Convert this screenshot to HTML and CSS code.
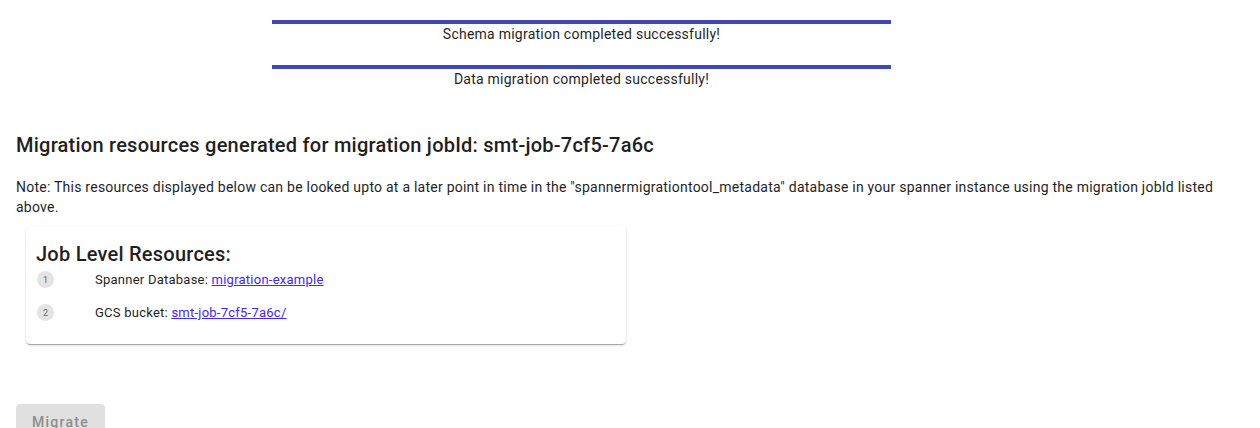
FILE: index.html
```html
<!DOCTYPE html>
<html>
<head>
<meta charset="utf-8">
<link rel="stylesheet" href="styles.css">
</head>
<body>
<div class="page">
  <div class="progress-block first">
    <div class="bar"></div>
    <div class="status">Schema migration completed successfully!</div>
  </div>
  <div class="progress-block">
    <div class="bar"></div>
    <div class="status">Data migration completed successfully!</div>
  </div>

  <h2 class="heading">Migration resources generated for migration jobId: smt-job-7cf5-7a6c</h2>
  <p class="note">Note: This resources displayed below can be looked upto at a later point in time in the "spannermigrationtool_metadata" database in your spanner instance using the migration jobId listed above.</p>

  <div class="card">
    <h3 class="card-title">Job Level Resources:</h3>
    <ul class="res-list">
      <li class="res-item"><span class="num">1</span><span class="res-text">Spanner Database: <a href="#" class="link">migration-example</a></span></li>
      <li class="res-item"><span class="num">2</span><span class="res-text">GCS bucket: <a href="#" class="link">smt-job-7cf5-7a6c/</a></span></li>
    </ul>
  </div>

  <button class="migrate-btn" disabled>Migrate</button>
</div>
</body>
</html>
```

FILE: styles.css
```css
html, body {
  margin: 0;
  padding: 0;
  background: #fff;
}
body {
  font-family: Roboto, "Liberation Sans", sans-serif;
  color: #202124;
  overflow: hidden;
  letter-spacing: 0.24px;
}
.page {
  padding: 0 16px;
}
.progress-block {
  width: 619px;
  margin-left: 256px;
  margin-bottom: 21px;
}
.progress-block.first {
  padding-top: 20px;
}
.bar {
  height: 4px;
  background: #3f48b5;
}
.status {
  text-align: center;
  font-size: 14px;
  line-height: 20px;
  color: #1f1f1f;
}
.heading {
  margin: 40px 0 0;
  font-size: 20px;
  font-weight: 500;
  line-height: 32px;
  color: #1f1f1f;
}
.note {
  margin: 16px 0 0;
  font-size: 14px;
  line-height: 20px;
  color: #1f1f1f;
  max-width: 1220px;
}
.card {
  margin: 9px 0 0 10px;
  width: 600px;
  box-sizing: border-box;
  padding: 14px 10px 15px;
  border-radius: 4px;
  background: #fff;
  box-shadow: 0 2px 1px -1px rgba(0,0,0,.2), 0 1px 1px 0 rgba(0,0,0,.14), 0 1px 3px 0 rgba(0,0,0,.12);
}
.card-title {
  margin: 0;
  font-size: 20px;
  font-weight: 500;
  line-height: 28px;
  color: #1f1f1f;
}
.res-list {
  list-style: none;
  margin: 0;
  padding: 0;
}
.res-item {
  display: flex;
  align-items: center;
  height: 33px;
  font-size: 13px;
}
.res-item:first-child {
  margin-top: -5px;
}
.num {
  width: 17px;
  height: 17px;
  border-radius: 50%;
  background: #e4e4e4;
  color: #666;
  font-size: 9px;
  letter-spacing: 0;
  display: flex;
  align-items: center;
  justify-content: center;
  margin-left: 1px;
  flex-shrink: 0;
}
.res-text {
  margin-left: 41px;
  color: #1f1f1f;
}
.link {
  color: #4a25f2;
  text-decoration: underline;
}
.migrate-btn {
  margin-top: 60px;
  width: 89px;
  height: 36px;
  border: none;
  border-radius: 4px;
  background: #e0e0e0;
  color: #8e8e8e;
  font-family: Roboto, "Liberation Sans", sans-serif;
  font-size: 14px;
  font-weight: 500;
  letter-spacing: 1.25px;
  padding: 0;
}
```
